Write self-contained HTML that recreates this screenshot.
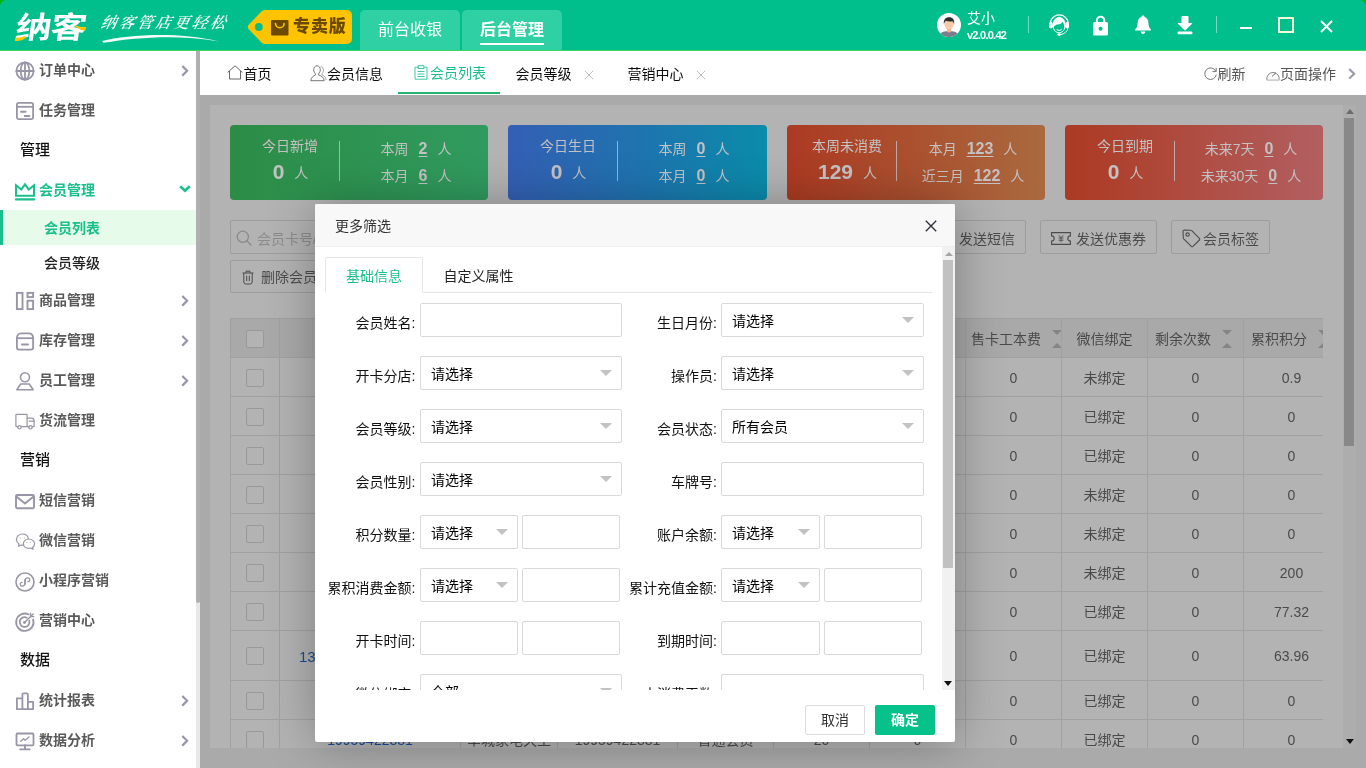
<!DOCTYPE html>
<html lang="zh-CN">
<head>
<meta charset="utf-8">
<title>纳客 - 会员列表</title>
<style>
*{box-sizing:border-box;margin:0;padding:0}
html,body{width:1366px;height:768px;overflow:hidden}
body{position:relative;background:#aaaaaa;font-family:"Liberation Sans","Noto Sans CJK SC",sans-serif;font-size:14px;color:#333;line-height:1}
.abs{position:absolute}
svg{display:block;overflow:visible}
/* ---------- header ---------- */
#hd{position:absolute;left:0;top:0;width:1366px;height:51px;background:#00bf8c;border-bottom:1px solid #3cd564}
#logo{position:absolute;left:16px;top:8px;font-size:30px;line-height:40px;font-weight:700;color:#fff;letter-spacing:-1px;transform-origin:0 50%;transform:skewX(-8deg) scaleX(1.2);white-space:nowrap}
#slogan{position:absolute;left:101px;top:13px;font-family:"Liberation Serif","Noto Serif CJK SC",serif;font-size:15.500px;line-height:20px;font-weight:600;font-style:italic;color:#fff;letter-spacing:2.700px;white-space:nowrap;transform:skewX(-12deg)}
#tag{position:absolute;left:248px;top:10px;width:104px;height:34px}
#tagtx{position:absolute;left:293px;top:15px;font-size:17px;line-height:24px;font-weight:900;color:#6b4a00;white-space:nowrap;letter-spacing:.9px}
.htab{position:absolute;top:10px;height:40px;width:100px;background:#30d0a5;border-radius:5px 5px 0 0;color:#fff;font-size:16px;line-height:40px;text-align:center}
#uname{position:absolute;left:967px;top:10px;color:#fff;font-size:14px;line-height:17px}
#uver{position:absolute;left:967px;top:28px;color:#fff;font-size:11px;line-height:14px;letter-spacing:-.75px;font-weight:bold}
.hdiv{position:absolute;top:16px;width:1px;height:17px;background:rgba(255,255,255,.45)}
/* ---------- sidebar ---------- */
#sb{position:absolute;left:0;top:51px;width:196px;height:717px;background:#fff}
#sbbar{position:absolute;left:196px;top:51px;width:4px;height:717px;background:#e8e8e8}
#sbthumb{position:absolute;left:196px;top:51px;width:4px;height:552px;background:#b0b0b0;border-radius:0 0 2px 2px}
.mi{position:absolute;left:0;width:196px;height:40px;color:#5a5a5a;font-weight:bold;font-size:14px;line-height:40px;white-space:nowrap}
.mi span{position:absolute;left:39px;top:0}
.mi svg.ic{position:absolute;left:15px;top:10px}
.mi svg.ar{position:absolute;left:179px;top:14px}
.mh{position:absolute;left:20px;color:#111;font-weight:500;font-size:15px;line-height:40px;height:40px;white-space:nowrap}
.smi{position:absolute;left:0;width:196px;height:35px;line-height:37px;font-weight:bold;color:#333;padding-left:44px;white-space:nowrap}
/* ---------- tab bar ---------- */
#tb{position:absolute;left:200px;top:51px;width:1166px;height:44px;background:#fff}
.tt{position:absolute;top:1px;height:44px;line-height:44px;font-size:14px;color:#0d0d0d;white-space:nowrap}

/* ---------- main (dimmed by modal shade) ---------- */
#card{position:absolute;left:210px;top:105px;width:1133px;height:643px;background:#b3b3b3;overflow:hidden}
#vsb{position:absolute;left:1343px;top:105px;width:13px;height:643px;background:#adadad}
.st{position:absolute;top:20px;width:258px;height:75px;border-radius:4px;color:#c3c1c3;font-size:14px;white-space:nowrap}
.st .l1{position:absolute;left:0;width:120px;top:13px;line-height:16px;text-align:center}
.st .l2{position:absolute;left:0;width:121px;top:34px;line-height:26px;text-align:center}
.st .l2 b{font-size:21px;margin-right:10px;vertical-align:-1px}
.st .dv{position:absolute;left:109px;top:16px;width:1px;height:40px;background:#c3c1c3;opacity:.8}
.st .r{position:absolute;left:111px;width:150px;text-align:center;line-height:20px}
.st .r b{font-size:16px;margin:0 10px;text-decoration:underline;text-underline-offset:2px;vertical-align:0}
.btn{position:absolute;height:34px;border:1px solid #9d9d9d;border-radius:2px;color:#4c4c4c;font-size:14px;line-height:36px;white-space:nowrap}
#tbl{position:absolute;left:20px;top:213px;width:1093px;height:440px;overflow:hidden;border-top:1px solid #a1a1a1;border-left:1px solid #a1a1a1}
.tr{position:absolute;left:0;width:1110px;border-bottom:1px solid #a1a1a1}
.tc{position:absolute;top:0;height:100%;overflow:hidden;border-right:1px solid #a1a1a1;color:#4a4a4a;font-size:14px;text-align:center;white-space:nowrap}
.ck{position:absolute;left:16px;width:18px;height:18px;border:1px solid #999;border-radius:2px;background:#b3b3b3}

/* ---------- modal ---------- */
#md{position:absolute;left:315px;top:204px;width:640px;height:538px;background:#fff;border-radius:2px;box-shadow:1px 1px 50px rgba(0,0,0,.3)}
#mdh{position:absolute;left:0;top:0;width:640px;height:43px;background:#f8f8f8;border-bottom:1px solid #eee;border-radius:2px 2px 0 0;line-height:45px;padding-left:20px;color:#333;font-size:14px}
#mdb{position:absolute;left:0;top:43px;width:627px;height:443px;overflow:hidden}
#mds{position:absolute;left:627px;top:43px;width:13px;height:443px;background:#f1f1f1}
.lb{position:absolute;width:110px;text-align:right;color:#111;font-size:14px;line-height:34px;height:34px;white-space:nowrap}
.ip{position:absolute;height:34px;border:1px solid #d9d9d9;border-radius:2px;background:#fff;color:#000;font-size:14px;line-height:34px;padding-left:10px;white-space:nowrap}
.ip i{position:absolute;right:9px;top:13px;width:0;height:0;border:6px solid transparent;border-top-color:#c2c2c2;border-bottom:0}
.mbtn{position:absolute;top:501px;width:60px;height:30px;border-radius:2px;font-size:14px;line-height:28px;text-align:center}
</style>
</head>
<body><div id="root" style="position:absolute;left:0;top:0;width:1366px;height:768px;will-change:transform">
<!-- header -->
<div id="hd">
  <svg class="abs" style="left:0;top:0" width="6" height="6" viewBox="0 0 6 6"><path d="M0 0H5.500A7 7 0 0 0 0 5.500Z" fill="#00b400"/></svg>
  <svg class="abs" style="left:1360px;top:0" width="6" height="6" viewBox="0 0 6 6"><path d="M6 0H.5A7 7 0 0 1 6 5.500Z" fill="#00b400"/></svg>
  <div id="logo">纳客</div>
  <div id="slogan">纳客管店更轻松</div>
  <svg class="abs" style="left:102px;top:33px" width="118" height="10" viewBox="0 0 118 10"><path d="M0 8C26 1.800 74 -1.600 117 8.400C76 1.400 36 4.200 1.500 9.800Z" fill="#fff" opacity=".95"/></svg>
  <svg class="abs" style="left:14px;top:24px" width="74" height="20" viewBox="0 0 74 20"><path d="M1 13.500c4 .6 7.500-.3 10.600-1.800l-.4 2.600c-2.800 2.200-6.600 3.300-10.200 2.600Z" fill="#ffc300"/><path d="M59.500 1.800c4.600-.9 7.400 2.200 12.500 1l-.3 3.300c-5 1.600-7.600-2.600-12.200-4.300Z" fill="#ffc300"/></svg>
  <svg id="tag" viewBox="0 0 104 34"><path d="M17 0H99a5 5 0 0 1 5 5V29a5 5 0 0 1-5 5H17a6 6 0 0 1-4-2L1 19.5a3.5 3.5 0 0 1 0-5L13 2a6 6 0 0 1 4-2Z" fill="#ffc300"/><circle cx="10.800" cy="17" r="3.900" fill="#00bf8c"/><rect x="23" y="10" width="17.500" height="15.500" rx="1" fill="#6b4a00"/><path d="M27.500 13.500a4.300 4.300 0 0 0 8.600 0" fill="none" stroke="#ffc300" stroke-width="1.600" stroke-linecap="round"/></svg>
  <div id="tagtx">专卖版</div>
  <div class="htab" style="left:360px">前台收银</div>
  <div class="htab" style="left:462px;font-weight:bold">后台管理<i class="abs" style="left:18px;top:33px;width:64px;height:2px;background:#fff"></i></div>
  <div id="uname">艾小</div>
  <div id="uver">v2.0.0.42</div>

  <!-- avatar -->
  <svg class="abs" style="left:937px;top:13px" width="24" height="24" viewBox="0 0 24 24"><defs><clipPath id="avc"><circle cx="12" cy="12" r="12"/></clipPath></defs><circle cx="12" cy="12" r="12" fill="#fff"/><g clip-path="url(#avc)"><path d="M1.500 24.500c.6-4.200 3.600-5.600 7.200-6.200h6.600c3.600.6 6.600 2 7.200 6.200Z" fill="#7d7b8c"/><path d="M10 15h4v3.500l-2 1.300-2-1.300Z" fill="#eeb491"/><ellipse cx="12" cy="11.300" rx="4.600" ry="5.400" fill="#f6c9a8"/><path d="M6.900 11.500c-.8-4.800 1.600-7.300 5.200-7.300 3.800 0 5.800 2.600 5 7.300-.3-1.700-.9-2.700-1.700-3.300-2.300.5-4.800.3-6.500-.4-.9.800-1.700 2-2 3.700Z" fill="#2f2d2e"/></g></svg>
  <!-- headset -->
  <svg class="abs" style="left:1048px;top:13px" width="22" height="24" viewBox="0 0 22 24" fill="none" stroke="#fff"><path d="M2.300 10A9 9.100 0 0 1 20.200 10" stroke-width="1.200"/><rect x="1" y="9" width="3.700" height="6.300" rx="1.500" fill="#fff" stroke="none"/><rect x="17.500" y="9" width="3.500" height="6.300" rx="1.500" fill="#fff" stroke="none"/><path d="M4.400 14.600C4.400 7.200 7.600 3.900 11.200 3.900c3.600 0 6.800 3.300 6.800 10.700l-1.700-.5c-.1-2.300-.8-4-1.800-5.300-.6 1.700-2.500 2.500-5 2.800-2 .3-3.300 1.200-3.700 2.600Z" fill="#fff" stroke="none"/><path d="M5.300 13.600c0 3.500 2.700 6.100 5.800 6.100s5.700-2.600 5.700-6.100" stroke-width="1"/><path d="M9 16.800q2.200 1.500 4.400 0" stroke-width="1" stroke-linecap="round"/><path d="M19.800 15c0 3.500-3.600 6-7.300 6.500" stroke-width="1"/><ellipse cx="11.100" cy="21.400" rx="1.800" ry="1.250" fill="#fff" stroke="none"/></svg>
  <!-- lock -->
  <svg class="abs" style="left:1093px;top:15px" width="16" height="21" viewBox="0 0 16 21"><path d="M3.900 8V5.400a3.700 3.700 0 0 1 7.400 0V8" fill="none" stroke="#fff" stroke-width="2"/><rect x="0" y="7" width="15" height="13.600" rx="1.600" fill="#fff"/><circle cx="7.500" cy="13.800" r="2" fill="#00bf8c"/></svg>
  <!-- bell -->
  <svg class="abs" style="left:1135px;top:15px" width="16" height="19" viewBox="0 0 16 19"><path d="M8 .6c.9 0 1.500.6 1.500 1.400 2.500.8 3.900 3 3.900 5.700 0 3.400.9 5.200 2.400 6.500v1.200H.2v-1.200c1.500-1.300 2.400-3.100 2.400-6.500 0-2.700 1.400-4.900 3.900-5.700C6.500 1.200 7.100.6 8 .6Z" fill="#fff"/><path d="M5.700 16.600h4.600a2.300 2.300 0 0 1-4.600 0Z" fill="#fff"/></svg>
  <!-- download -->
  <svg class="abs" style="left:1177px;top:16px" width="16" height="19" viewBox="0 0 16 19"><path d="M5.300 0h5.400a.8.800 0 0 1 .8.800V7h3.300a.4.400 0 0 1 .3.700L8.400 14.300a.6.600 0 0 1-.8 0L.9 7.700A.4.400 0 0 1 1.200 7h3.300V.8A.8.800 0 0 1 5.300 0Z" fill="#fff"/><rect x=".5" y="15.500" width="15" height="2.800" rx="1.200" fill="#fff"/></svg>
  <!-- window controls -->
  <div class="abs" style="left:1240px;top:27px;width:12px;height:2px;background:#fff"></div>
  <div class="abs" style="left:1278px;top:17px;width:16px;height:16px;border:2px solid #f4fbd8"></div>
  <svg class="abs" style="left:1320px;top:20px" width="13" height="13" viewBox="0 0 13 13"><path d="M1 1l11 11M12 1L1 12" stroke="#fff" stroke-width="1.900" fill="none"/></svg>
  <div class="hdiv" style="left:1028px"></div>
  <div class="hdiv" style="left:1216px"></div>
</div>
<!-- sidebar -->
<div id="sb">
  <div class="mi" style="top:-1px"><svg class="ic" style="left:15px;top:11px" width="20" height="20" viewBox="0 0 20 20" fill="none" stroke="#9896a6" stroke-width="1.8" stroke-linecap="round" stroke-linejoin="round"><circle cx="10" cy="10" r="8.600"/><path d="M10 1.400v17.200M1.400 10h17.200"/><ellipse cx="10" cy="10" rx="4.300" ry="8.600"/></svg><span>订单中心</span><svg class="ar" style="left:181px;top:15px" width="8" height="12" viewBox="0 0 8 12" fill="none" stroke="#9896a6" stroke-width="2.200"><path d="M1.300 1l4.800 4.800-4.800 4.800"/></svg></div>
  <div class="mi" style="top:39px"><svg class="ic" style="left:15px;top:10.5px" width="20" height="20" viewBox="0 0 20 20" fill="none" stroke="#9896a6" stroke-width="1.8" stroke-linecap="round" stroke-linejoin="round"><rect x="1.900" y="1.900" width="16.200" height="16.200" rx="1.800"/><path d="M1.900 5.800h16.200" stroke-linecap="butt"/><path d="M6 10.800h4.600M9.800 15h4.600" stroke-width="2"/></svg><span>任务管理</span></div>
  <div class="mh" style="top:79px">管理</div>
  <div class="mi" style="top:119px;color:#1bbf8c"><svg class="ic" style="left:15px;top:13px" width="20" height="20" viewBox="0 0 20 20" fill="none" stroke="#1bbf8c" stroke-width="2.02" stroke-linecap="round" stroke-linejoin="round"><path d="M1 2.300l5.300 4.300L10 1.300l3.700 5.300L19 2.300v10.500H1Z" stroke-linejoin="miter" stroke-linecap="butt"/><path d="M.9 16.400h18.200" stroke-width="2.100"/></svg><span>会员管理</span><svg class="ar" style="left:179px;top:15px" width="12" height="8" viewBox="0 0 12 8" fill="none" stroke="#1bbf8c" stroke-width="2.600"><path d="M1.200 1.200l4.800 4.600 4.800-4.600"/></svg></div>
  <div class="smi" style="top:159px;background:#e6fbea;color:#1bbf8c;border-left:3px solid #1bbf8c;padding-left:41px">会员列表</div>
  <div class="smi" style="top:194px;font-weight:500;color:#222">会员等级</div>
  <div class="mi" style="top:229px"><svg class="ic" style="left:15px;top:11px" width="20" height="20" viewBox="0 0 20 20" fill="none" stroke="#9896a6" stroke-width="1.91" stroke-linecap="round" stroke-linejoin="round"><rect x="1.900" y="1.900" width="5.600" height="16.200" stroke-linejoin="miter"/><rect x="12.500" y="1.900" width="5.600" height="4.200" stroke-linejoin="miter"/><rect x="12.500" y="9.700" width="5.600" height="8.400" stroke-linejoin="miter"/></svg><span>商品管理</span><svg class="ar" style="left:181px;top:15px" width="8" height="12" viewBox="0 0 8 12" fill="none" stroke="#9896a6" stroke-width="2.200"><path d="M1.300 1l4.800 4.800-4.800 4.800"/></svg></div>
  <div class="mi" style="top:269px"><svg class="ic" style="left:15px;top:11px" width="20" height="20" viewBox="0 0 20 20" fill="none" stroke="#9896a6" stroke-width="1.8" stroke-linecap="round" stroke-linejoin="round"><path d="M1.900 7.200c0-3 1.800-4.800 4.300-4.800h7.600c2.500 0 4.300 1.800 4.300 4.800"/><path d="M1.900 7.200h16.200" stroke-linecap="butt"/><path d="M1.900 7.200v9.400a2 2 0 0 0 2 2h12.200a2 2 0 0 0 2-2V7.200"/><path d="M7 13.400h6" stroke-width="2"/></svg><span>库存管理</span><svg class="ar" style="left:181px;top:15px" width="8" height="12" viewBox="0 0 8 12" fill="none" stroke="#9896a6" stroke-width="2.200"><path d="M1.300 1l4.800 4.800-4.800 4.800"/></svg></div>
  <div class="mi" style="top:309px"><svg class="ic" style="left:15px;top:10.5px" width="20" height="20" viewBox="0 0 20 20" fill="none" stroke="#9896a6" stroke-width="1.59" stroke-linecap="round" stroke-linejoin="round"><circle cx="10" cy="6.300" r="4.500"/><path d="M5.700 13h8.600l3.900 5.700H1.800Z"/></svg><span>员工管理</span><svg class="ar" style="left:181px;top:15px" width="8" height="12" viewBox="0 0 8 12" fill="none" stroke="#9896a6" stroke-width="2.200"><path d="M1.300 1l4.800 4.800-4.800 4.800"/></svg></div>
  <div class="mi" style="top:349px"><svg class="ic" style="left:15px;top:13px" width="20" height="17" viewBox="0 0 20 17" fill="none" stroke="#9896a6" stroke-width="1.22" stroke-linecap="round" stroke-linejoin="round"><path d="M2.800 13.700H1.700a.8.800 0 0 1-.8-.8V2.100a.8.800 0 0 1 .8-.8h9.600a.8.800 0 0 1 .8.800v11.600H6.300"/><path d="M12.100 5.200h4.200c1.500 0 2.800 1.300 2.800 2.800v5a.7.700 0 0 1-.7.700h-.9M12.100 13.700h1.700"/><path d="M14.200 8.200h4.700"/><circle cx="4.500" cy="14.300" r="1.700"/><circle cx="15.500" cy="14.300" r="1.700"/></svg><span>货流管理</span></div>
  <div class="mh" style="top:389px">营销</div>
  <div class="mi" style="top:429px"><svg class="ic" style="left:14.5px;top:13.5px" width="20" height="16" viewBox="0 0 20 16" fill="none" stroke="#9896a6" stroke-width="1.91" stroke-linecap="round" stroke-linejoin="round"><rect x="1" y="1" width="18" height="13.300" rx="1.200"/><path d="M1.400 2.600l8.600 7 8.600-7" stroke-linejoin="miter"/></svg><span>短信营销</span></div>
  <div class="mi" style="top:469px"><svg class="ic" style="left:14.5px;top:12px" width="21" height="20" viewBox="0 0 21 20" fill="none" stroke="#9896a6" stroke-width="1.22" stroke-linecap="round" stroke-linejoin="round"><path d="M8.300 13.100c-.7.100-1.300.1-2.100-.1l-2.700 1.300.5-2.300C2.300 10.900 1.400 9.300 1.400 7.600 1.400 4.400 4.100 2 7.400 2c3 0 5.500 1.900 5.900 4.500"/><path d="M19.600 11.700c0 1.400-.7 2.600-1.900 3.500l.4 1.900-2.200-1.100c-.7.200-1.400.3-2.100.3-3 0-5.400-2-5.400-4.600s2.400-4.700 5.400-4.700 5.800 2.100 5.800 4.700Z"/><circle cx="5.300" cy="6" r=".5" fill="#9896a6" stroke="none"/><circle cx="9.300" cy="6" r=".5" fill="#9896a6" stroke="none"/><circle cx="11.800" cy="10.600" r=".5" fill="#9896a6" stroke="none"/><circle cx="15.500" cy="10.600" r=".5" fill="#9896a6" stroke="none"/></svg><span>微信营销</span></div>
  <div class="mi" style="top:509px"><svg class="ic" style="left:14.9px;top:12px" width="20" height="20" viewBox="0 0 20 20" fill="none" stroke="#9896a6" stroke-width="1.6" stroke-linecap="round" stroke-linejoin="round"><circle cx="10" cy="10" r="9"/><path d="M10.300 12.200v-4c0-1.500 1.100-2.400 2.400-2.400 1.200 0 2.100.8 2.100 1.900 0 1.200-1 1.900-2 1.900M9.700 7.800v4c0 1.500-1.100 2.400-2.400 2.400-1.200 0-2.100-.8-2.100-1.900 0-1.200 1-1.900 2-1.900" stroke-width="1.300"/></svg><span>小程序营销</span></div>
  <div class="mi" style="top:549px"><svg class="ic" style="left:14.8px;top:11.5px" width="20" height="20" viewBox="0 0 20 20" fill="none" stroke="#9896a6" stroke-width="1.8" stroke-linecap="round" stroke-linejoin="round"><path d="M18.100 7.500a8.700 8.700 0 1 1-4.700-5.200"/><path d="M14.300 8.700a4.900 4.900 0 1 1-2.500-3"/><circle cx="9.500" cy="10.500" r="1.400" fill="#9896a6" stroke="none"/><path d="M9.700 10.300L18.200 2M15.500 1.300v3.300h3.300" stroke-width="1.400"/></svg><span>营销中心</span></div>
  <div class="mh" style="top:589px">数据</div>
  <div class="mi" style="top:629px"><svg class="ic" style="left:15px;top:11px" width="20" height="20" viewBox="0 0 20 20" fill="none" stroke="#9896a6" stroke-width="1.8" stroke-linecap="round" stroke-linejoin="round"><path d="M1.900 18.200V7.300h5.500v10.900M7.400 7.300V3.600a1.300 1.300 0 0 1 1.300-1.300h2.900a1.300 1.300 0 0 1 1.300 1.300v14.600M12.900 10.800h5.200v7.400H1.900" stroke-linejoin="round"/></svg><span>统计报表</span><svg class="ar" style="left:181px;top:15px" width="8" height="12" viewBox="0 0 8 12" fill="none" stroke="#9896a6" stroke-width="2.200"><path d="M1.300 1l4.800 4.800-4.800 4.800"/></svg></div>
  <div class="mi" style="top:669px"><svg class="ic" style="left:15px;top:12px" width="20" height="20" viewBox="0 0 20 20" fill="none" stroke="#9896a6" stroke-width="1.8" stroke-linecap="round" stroke-linejoin="round"><rect x="1.500" y="1.500" width="17" height="11.800" rx="1"/><path d="M10 13.300v3.700M5.300 17.400h9.400" stroke-width="1.900"/><path d="M5.800 9.300l2.700-2.600 1.600 1.500 3.900-3.300" stroke-width="1.300"/></svg><span>数据分析</span><svg class="ar" style="left:181px;top:15px" width="8" height="12" viewBox="0 0 8 12" fill="none" stroke="#9896a6" stroke-width="2.200"><path d="M1.300 1l4.800 4.800-4.800 4.800"/></svg></div>
</div>
<div id="sbbar"></div><div id="sbthumb"></div>
<!-- tab bar -->
<div id="tb">
  <svg class="abs" style="left:27px;top:14px" width="16" height="15" viewBox="0 0 16 15" fill="none" stroke="#555" stroke-width=".9"><path d="M.6 7.500L8 .8l7.400 6.700M2.500 6v8h11V6"/></svg>
  <div class="tt" style="left:43.500px">首页</div>
  <svg class="abs" style="left:110px;top:14px" width="17" height="17" viewBox="0 0 17 17" fill="none" stroke="#666" stroke-width=".9"><path d="M7 .8c2 0 3.300 1.700 3.300 4 0 1.700-.8 3.200-1.700 4v1.200c2.700.8 5.400 2.200 5.600 5.700H.8c.2-3.500 2.900-4.900 4.600-5.700V8.800c-.9-.8-1.700-2.300-1.700-4 0-2.300 1.300-4 3.300-4Z"/><path d="M10.600 1.500c1.800.2 2.800 1.800 2.800 3.700 0 1.600-.7 2.900-1.500 3.600v1.100c2 .7 4 2 4.300 5.300" stroke="#999"/></svg>
  <div class="tt" style="left:127px">会员信息</div>
  <svg class="abs" style="left:214px;top:14px" width="14" height="15" viewBox="0 0 14 15" fill="none" stroke="#3fcba0" stroke-width="1"><path d="M4 2.200H1v12h12v-12h-3"/><rect x="4.200" y=".7" width="5.600" height="2.800"/><path d="M3.500 6.500h7M3.500 9h7M3.500 11.500h7"/></svg>
  <div class="tt" style="left:230px;color:#1bbf8c;top:0">会员列表</div>
  <div class="abs" style="left:198px;top:41px;width:102px;height:2px;background:#23b46e"></div>
  <div class="tt" style="left:315.500px">会员等级</div>
  <svg class="abs" style="left:383.500px;top:19px" width="10" height="10" viewBox="0 0 10 10"><path d="M.7.700l8.600 8.600M9.300.7L.7 9.300" stroke="#bdbdbd" stroke-width="1" fill="none"/></svg>
  <div class="tt" style="left:427.500px">营销中心</div>
  <svg class="abs" style="left:495.500px;top:19px" width="10" height="10" viewBox="0 0 10 10"><path d="M.7.700l8.600 8.600M9.300.7L.7 9.300" stroke="#bdbdbd" stroke-width="1" fill="none"/></svg>
  <svg class="abs" style="left:1003.500px;top:16px" width="13" height="13" viewBox="0 0 13 13" fill="none" stroke="#666" stroke-width=".9"><path d="M11.800 4.200A5.800 5.800 0 1 0 12.300 7.600"/><path d="M12.200.8v3.800H8.400"/></svg>
  <div class="tt" style="left:1017.500px;color:#555">刷新</div>
  <svg class="abs" style="left:1066px;top:16.500px" width="14" height="13" viewBox="0 0 14 13" fill="none" stroke="#777" stroke-width=".9"><path d="M.9 11.800A6.200 6.200 0 1 1 13.100 11.800"/><path d="M.6 12.100h12.800" stroke="#bbb" stroke-width="1.200"/><path d="M6 8.500l4-3.800" stroke="#555"/></svg>
  <div class="tt" style="left:1080px;color:#555">页面操作</div>
  <svg class="abs" style="left:1147.500px;top:17px" width="8" height="12" viewBox="0 0 8 12" fill="none" stroke="#9896a6" stroke-width="2"><path d="M1.200 1l5 4.800-5 4.800"/></svg>
</div>

<!-- main content, darkened by the modal shade -->
<div id="card">
  <div class="st" style="left:20px;background:linear-gradient(90deg,#2c8c46,#309b5f)"><div class="l1">今日新增</div><div class="l2"><b>0</b>人</div><div class="dv"></div><div class="r" style="top:14px">本周<b>2</b>人</div><div class="r" style="top:41px">本月<b>6</b>人</div></div>
  <div class="st" style="left:298px;width:259px;background:linear-gradient(90deg,#345fb4,#1f73af 50%,#0a8caa)"><div class="l1">今日生日</div><div class="l2"><b>0</b>人</div><div class="dv"></div><div class="r" style="top:14px">本周<b>0</b>人</div><div class="r" style="top:41px">本月<b>0</b>人</div></div>
  <div class="st" style="left:577px;background:linear-gradient(90deg,#ac3a22,#aa693e)"><div class="l1">本周未消费</div><div class="l2"><b>129</b>人</div><div class="dv"></div><div class="r" style="top:14px">本月<b>123</b>人</div><div class="r" style="top:41px">近三月<b>122</b>人</div></div>
  <div class="st" style="left:855px;background:linear-gradient(90deg,#ac3a22,#b25f61)"><div class="l1">今日到期</div><div class="l2"><b>0</b>人</div><div class="dv"></div><div class="r" style="top:14px">未来7天<b>0</b>人</div><div class="r" style="top:41px">未来30天<b>0</b>人</div></div>
  <div class="btn" style="left:20px;top:115px;width:300px;color:#8c8c8c;padding-left:26px"><svg class="abs" style="left:5px;top:9px" width="16" height="16" viewBox="0 0 16 16" fill="none" stroke="#8a8a8a" stroke-width="1.300"><circle cx="6.800" cy="6.800" r="5.600"/><path d="M11 11l4 4" stroke-linecap="round"/></svg>会员卡号/手机号/姓名</div>
  <div class="btn" style="left:20px;top:155px;width:120px;height:33px;line-height:33px;padding-left:30px"><svg class="abs" style="left:11px;top:9px" width="12" height="15" viewBox="0 0 12 15" fill="none" stroke="#4c4c4c" stroke-width="1"><path d="M.5 3h11M4 3V1.200h4V3M1.800 3v9a2 2 0 0 0 2 2h4.400a2 2 0 0 0 2-2V3M4.700 5.800v5.200M7.300 5.800v5.200"/></svg>删除会员</div>
  <div class="btn" style="left:716px;top:115px;width:100px;padding-left:32px">发送短信</div>
  <div class="btn" style="left:830px;top:115px;width:117px;padding-left:35px"><svg class="abs" style="left:10px;top:11px" width="20" height="13" viewBox="0 0 20 13" fill="none" stroke="#4c4c4c" stroke-width="1.100"><path d="M.6.600h18.800v3.300a2.600 2.600 0 0 0 0 5.200v3.300H.6V9.100a2.600 2.600 0 0 0 0-5.200Z"/><path d="M7.800 3.200l2.200 2.600 2.200-2.600M7.500 6h5M7.500 8.200h5M10 5.800v4.400" stroke-width=".9"/></svg>发送优惠券</div>
  <div class="btn" style="left:961px;top:115px;width:99px;padding-left:31px"><svg class="abs" style="left:10px;top:8px" width="19" height="19" viewBox="0 0 19 19" fill="none" stroke="#4c4c4c" stroke-width="1.100"><path d="M1 2.500a1.500 1.500 0 0 1 1.500-1.500l6.300.3a1.500 1.500 0 0 1 1 .4l7.600 7.600a1.200 1.200 0 0 1 0 1.700l-6.400 6.400a1.200 1.200 0 0 1-1.700 0L1.700 9.800a1.500 1.500 0 0 1-.4-1Z"/><circle cx="5.600" cy="5.600" r="1.700"/></svg>会员标签</div>
  <div id="tbl"><div class="tr" style="top:0;height:39px;background:#a9a9a9"><div class="tc" style="left:0;width:49px"><i class="ck" style="left:15px;top:11px"></i></div><div class="tc" style="left:49px;width:181px;line-height:40px"></div><div class="tc" style="left:230px;width:97px;line-height:40px"></div><div class="tc" style="left:327px;width:120px;line-height:40px"></div><div class="tc" style="left:447px;width:96px;line-height:40px"></div><div class="tc" style="left:543px;width:96px;line-height:40px"></div><div class="tc" style="left:639px;width:96px;line-height:40px"></div><div class="tc" style="left:735px;width:96px;line-height:40px;text-align:left;padding-left:5px">售卡工本费<i class="abs" style="left:85.5px;top:11px;border:5px solid transparent;border-top-color:#858585;width:0;height:0"></i><i class="abs" style="left:85.5px;top:19px;border:5px solid transparent;border-bottom-color:#858585;width:0;height:0"></i></div><div class="tc" style="left:831px;width:86px;line-height:40px">微信绑定</div><div class="tc" style="left:917px;width:96px;line-height:40px;text-align:left;padding-left:7px">剩余次数<i class="abs" style="left:73.5px;top:11px;border:5px solid transparent;border-top-color:#858585;width:0;height:0"></i><i class="abs" style="left:73.5px;top:19px;border:5px solid transparent;border-bottom-color:#858585;width:0;height:0"></i></div><div class="tc" style="left:1013px;width:96px;line-height:40px;text-align:left;padding-left:7px">累积积分<i class="abs" style="left:73.5px;top:11px;border:5px solid transparent;border-top-color:#858585;width:0;height:0"></i><i class="abs" style="left:73.5px;top:19px;border:5px solid transparent;border-bottom-color:#858585;width:0;height:0"></i></div></div><div class="tr" style="top:39px;height:39px"><div class="tc" style="left:0;width:49px"><i class="ck" style="left:15px;top:11px"></i></div><div class="tc" style="left:49px;width:181px;line-height:40px"></div><div class="tc" style="left:230px;width:97px;line-height:40px"></div><div class="tc" style="left:327px;width:120px;line-height:40px"></div><div class="tc" style="left:447px;width:96px;line-height:40px"></div><div class="tc" style="left:543px;width:96px;line-height:40px">0</div><div class="tc" style="left:639px;width:96px;line-height:40px">0</div><div class="tc" style="left:735px;width:96px;line-height:40px">0</div><div class="tc" style="left:831px;width:86px;line-height:40px">未绑定</div><div class="tc" style="left:917px;width:96px;line-height:40px">0</div><div class="tc" style="left:1013px;width:96px;line-height:40px">0.9</div></div><div class="tr" style="top:78px;height:39px"><div class="tc" style="left:0;width:49px"><i class="ck" style="left:15px;top:11px"></i></div><div class="tc" style="left:49px;width:181px;line-height:40px"></div><div class="tc" style="left:230px;width:97px;line-height:40px"></div><div class="tc" style="left:327px;width:120px;line-height:40px"></div><div class="tc" style="left:447px;width:96px;line-height:40px"></div><div class="tc" style="left:543px;width:96px;line-height:40px">0</div><div class="tc" style="left:639px;width:96px;line-height:40px">0</div><div class="tc" style="left:735px;width:96px;line-height:40px">0</div><div class="tc" style="left:831px;width:86px;line-height:40px">已绑定</div><div class="tc" style="left:917px;width:96px;line-height:40px">0</div><div class="tc" style="left:1013px;width:96px;line-height:40px">0</div></div><div class="tr" style="top:117px;height:39px"><div class="tc" style="left:0;width:49px"><i class="ck" style="left:15px;top:11px"></i></div><div class="tc" style="left:49px;width:181px;line-height:40px"></div><div class="tc" style="left:230px;width:97px;line-height:40px"></div><div class="tc" style="left:327px;width:120px;line-height:40px"></div><div class="tc" style="left:447px;width:96px;line-height:40px"></div><div class="tc" style="left:543px;width:96px;line-height:40px">0</div><div class="tc" style="left:639px;width:96px;line-height:40px">0</div><div class="tc" style="left:735px;width:96px;line-height:40px">0</div><div class="tc" style="left:831px;width:86px;line-height:40px">已绑定</div><div class="tc" style="left:917px;width:96px;line-height:40px">0</div><div class="tc" style="left:1013px;width:96px;line-height:40px">0</div></div><div class="tr" style="top:156px;height:39px"><div class="tc" style="left:0;width:49px"><i class="ck" style="left:15px;top:11px"></i></div><div class="tc" style="left:49px;width:181px;line-height:40px"></div><div class="tc" style="left:230px;width:97px;line-height:40px"></div><div class="tc" style="left:327px;width:120px;line-height:40px"></div><div class="tc" style="left:447px;width:96px;line-height:40px"></div><div class="tc" style="left:543px;width:96px;line-height:40px">0</div><div class="tc" style="left:639px;width:96px;line-height:40px">0</div><div class="tc" style="left:735px;width:96px;line-height:40px">0</div><div class="tc" style="left:831px;width:86px;line-height:40px">未绑定</div><div class="tc" style="left:917px;width:96px;line-height:40px">0</div><div class="tc" style="left:1013px;width:96px;line-height:40px">0</div></div><div class="tr" style="top:195px;height:39px"><div class="tc" style="left:0;width:49px"><i class="ck" style="left:15px;top:11px"></i></div><div class="tc" style="left:49px;width:181px;line-height:40px"></div><div class="tc" style="left:230px;width:97px;line-height:40px"></div><div class="tc" style="left:327px;width:120px;line-height:40px"></div><div class="tc" style="left:447px;width:96px;line-height:40px"></div><div class="tc" style="left:543px;width:96px;line-height:40px">0</div><div class="tc" style="left:639px;width:96px;line-height:40px">0</div><div class="tc" style="left:735px;width:96px;line-height:40px">0</div><div class="tc" style="left:831px;width:86px;line-height:40px">未绑定</div><div class="tc" style="left:917px;width:96px;line-height:40px">0</div><div class="tc" style="left:1013px;width:96px;line-height:40px">0</div></div><div class="tr" style="top:234px;height:39px"><div class="tc" style="left:0;width:49px"><i class="ck" style="left:15px;top:11px"></i></div><div class="tc" style="left:49px;width:181px;line-height:40px"></div><div class="tc" style="left:230px;width:97px;line-height:40px"></div><div class="tc" style="left:327px;width:120px;line-height:40px"></div><div class="tc" style="left:447px;width:96px;line-height:40px"></div><div class="tc" style="left:543px;width:96px;line-height:40px">0</div><div class="tc" style="left:639px;width:96px;line-height:40px">0</div><div class="tc" style="left:735px;width:96px;line-height:40px">0</div><div class="tc" style="left:831px;width:86px;line-height:40px">未绑定</div><div class="tc" style="left:917px;width:96px;line-height:40px">0</div><div class="tc" style="left:1013px;width:96px;line-height:40px">200</div></div><div class="tr" style="top:273px;height:39px"><div class="tc" style="left:0;width:49px"><i class="ck" style="left:15px;top:11px"></i></div><div class="tc" style="left:49px;width:181px;line-height:40px"></div><div class="tc" style="left:230px;width:97px;line-height:40px"></div><div class="tc" style="left:327px;width:120px;line-height:40px"></div><div class="tc" style="left:447px;width:96px;line-height:40px"></div><div class="tc" style="left:543px;width:96px;line-height:40px">0</div><div class="tc" style="left:639px;width:96px;line-height:40px">0</div><div class="tc" style="left:735px;width:96px;line-height:40px">0</div><div class="tc" style="left:831px;width:86px;line-height:40px">已绑定</div><div class="tc" style="left:917px;width:96px;line-height:40px">0</div><div class="tc" style="left:1013px;width:96px;line-height:40px">77.32</div></div><div class="tr" style="top:312px;height:50px"><div class="tc" style="left:0;width:49px"><i class="ck" style="left:15px;top:16px"></i></div><div class="tc" style="left:49px;width:181px;line-height:51px;color:#194b96;font-size:15px;text-align:left;padding-left:19px">1333868950166</div><div class="tc" style="left:230px;width:97px;line-height:51px"></div><div class="tc" style="left:327px;width:120px;line-height:51px"></div><div class="tc" style="left:447px;width:96px;line-height:51px"></div><div class="tc" style="left:543px;width:96px;line-height:51px">0</div><div class="tc" style="left:639px;width:96px;line-height:51px">0</div><div class="tc" style="left:735px;width:96px;line-height:51px">0</div><div class="tc" style="left:831px;width:86px;line-height:51px">已绑定</div><div class="tc" style="left:917px;width:96px;line-height:51px">0</div><div class="tc" style="left:1013px;width:96px;line-height:51px">63.96</div></div><div class="tr" style="top:362px;height:39px"><div class="tc" style="left:0;width:49px"><i class="ck" style="left:15px;top:11px"></i></div><div class="tc" style="left:49px;width:181px;line-height:40px"></div><div class="tc" style="left:230px;width:97px;line-height:40px"></div><div class="tc" style="left:327px;width:120px;line-height:40px"></div><div class="tc" style="left:447px;width:96px;line-height:40px"></div><div class="tc" style="left:543px;width:96px;line-height:40px">0</div><div class="tc" style="left:639px;width:96px;line-height:40px">0</div><div class="tc" style="left:735px;width:96px;line-height:40px">0</div><div class="tc" style="left:831px;width:86px;line-height:40px">已绑定</div><div class="tc" style="left:917px;width:96px;line-height:40px">0</div><div class="tc" style="left:1013px;width:96px;line-height:40px">0</div></div><div class="tr" style="top:401px;height:39px"><div class="tc" style="left:0;width:49px"><i class="ck" style="left:15px;top:11px"></i></div><div class="tc" style="left:49px;width:181px;line-height:40px;color:#194b96">19959422881</div><div class="tc" style="left:230px;width:97px;line-height:40px">幸城家电久工</div><div class="tc" style="left:327px;width:120px;line-height:40px">19959422881</div><div class="tc" style="left:447px;width:96px;line-height:40px">普通会员</div><div class="tc" style="left:543px;width:96px;line-height:40px">20</div><div class="tc" style="left:639px;width:96px;line-height:40px">0</div><div class="tc" style="left:735px;width:96px;line-height:40px">0</div><div class="tc" style="left:831px;width:86px;line-height:40px">已绑定</div><div class="tc" style="left:917px;width:96px;line-height:40px">0</div><div class="tc" style="left:1013px;width:96px;line-height:40px">0</div></div></div>
</div>
<div id="vsb">
  <i class="abs" style="left:3px;top:4px;border:4px solid transparent;border-bottom:5px solid #6c6c6c;border-top:0;width:0;height:0"></i>
  <i class="abs" style="left:1px;top:13px;width:10px;height:328px;background:#888"></i>
  <i class="abs" style="left:3px;top:634px;border:4px solid transparent;border-top:5px solid #111;border-bottom:0;width:0;height:0"></i>
</div>

<!-- modal -->
<div id="md">
  <div id="mdh">更多筛选</div>
  <svg class="abs" style="left:610px;top:16px" width="12" height="12" viewBox="0 0 12 12"><path d="M.8.800l10.400 10.400M11.200.8L.8 11.200" stroke="#2d2d3a" stroke-width="1.300" fill="none"/></svg>
  <div id="mdb">
    <div class="abs" style="left:10px;top:45px;width:607px;height:1px;background:#e6e6e6"></div>
    <div class="abs" style="left:10px;top:10px;width:98px;height:36px;border:1px solid #e6e6e6;border-bottom-color:#fff;border-radius:2px 2px 0 0;background:#fff;color:#1bbf8c;text-align:center;line-height:36px">基础信息</div>
    <div class="abs" style="left:128.500px;top:11px;line-height:36px;color:#222;white-space:nowrap">自定义属性</div>
    <div class="lb" style="left:-9.5px;top:59px">会员姓名:</div><div class="ip" style="left:105px;top:56px;width:202px"></div><div class="lb" style="left:292px;top:59px">生日月份:</div><div class="ip" style="left:406px;top:56px;width:203px">请选择<i></i></div><div class="lb" style="left:-9.5px;top:112px">开卡分店:</div><div class="ip" style="left:105px;top:109px;width:202px">请选择<i></i></div><div class="lb" style="left:292px;top:112px">操作员:</div><div class="ip" style="left:406px;top:109px;width:203px">请选择<i></i></div><div class="lb" style="left:-9.5px;top:165px">会员等级:</div><div class="ip" style="left:105px;top:162px;width:202px">请选择<i></i></div><div class="lb" style="left:292px;top:165px">会员状态:</div><div class="ip" style="left:406px;top:162px;width:203px">所有会员<i></i></div><div class="lb" style="left:-9.5px;top:218px">会员性别:</div><div class="ip" style="left:105px;top:215px;width:202px">请选择<i></i></div><div class="lb" style="left:292px;top:218px">车牌号:</div><div class="ip" style="left:406px;top:215px;width:203px"></div><div class="lb" style="left:-9.5px;top:271px">积分数量:</div><div class="ip" style="left:105px;top:268px;width:98px">请选择<i></i></div><div class="ip" style="left:207px;top:268px;width:98px"></div><div class="lb" style="left:292px;top:271px">账户余额:</div><div class="ip" style="left:406px;top:268px;width:99px">请选择<i></i></div><div class="ip" style="left:509px;top:268px;width:98px"></div><div class="lb" style="left:-9.5px;top:324px">累积消费金额:</div><div class="ip" style="left:105px;top:321px;width:98px">请选择<i></i></div><div class="ip" style="left:207px;top:321px;width:98px"></div><div class="lb" style="left:292px;top:324px">累计充值金额:</div><div class="ip" style="left:406px;top:321px;width:99px">请选择<i></i></div><div class="ip" style="left:509px;top:321px;width:98px"></div><div class="lb" style="left:-9.5px;top:377px">开卡时间:</div><div class="ip" style="left:105px;top:374px;width:98px"></div><div class="ip" style="left:207px;top:374px;width:98px"></div><div class="lb" style="left:292px;top:377px">到期时间:</div><div class="ip" style="left:406px;top:374px;width:99px"></div><div class="ip" style="left:509px;top:374px;width:98px"></div><div class="lb" style="left:-9.5px;top:430px">微信绑定:</div><div class="ip" style="left:105px;top:427px;width:202px">全部<i></i></div><div class="lb" style="left:292px;top:430px">未消费天数:</div><div class="ip" style="left:406px;top:427px;width:203px"></div>
  </div>
  <div id="mds">
    <i class="abs" style="left:2.500px;top:5px;border:4px solid transparent;border-bottom:4.500px solid #a3a3a3;border-top:0;width:0;height:0"></i>
    <i class="abs" style="left:1px;top:13px;width:10px;height:308px;background:#c1c1c1"></i>
    <i class="abs" style="left:2px;top:434px;border:4px solid transparent;border-top:5px solid #111;border-bottom:0;width:0;height:0"></i>
  </div>
  <div class="mbtn" style="left:490px;border:1px solid #dcdcdc;background:#fff;color:#333">取消</div>
  <div class="mbtn" style="left:560px;background:#07c18b;color:#fff;line-height:30px;font-weight:bold">确定</div>
</div>
</div></body>
</html>
